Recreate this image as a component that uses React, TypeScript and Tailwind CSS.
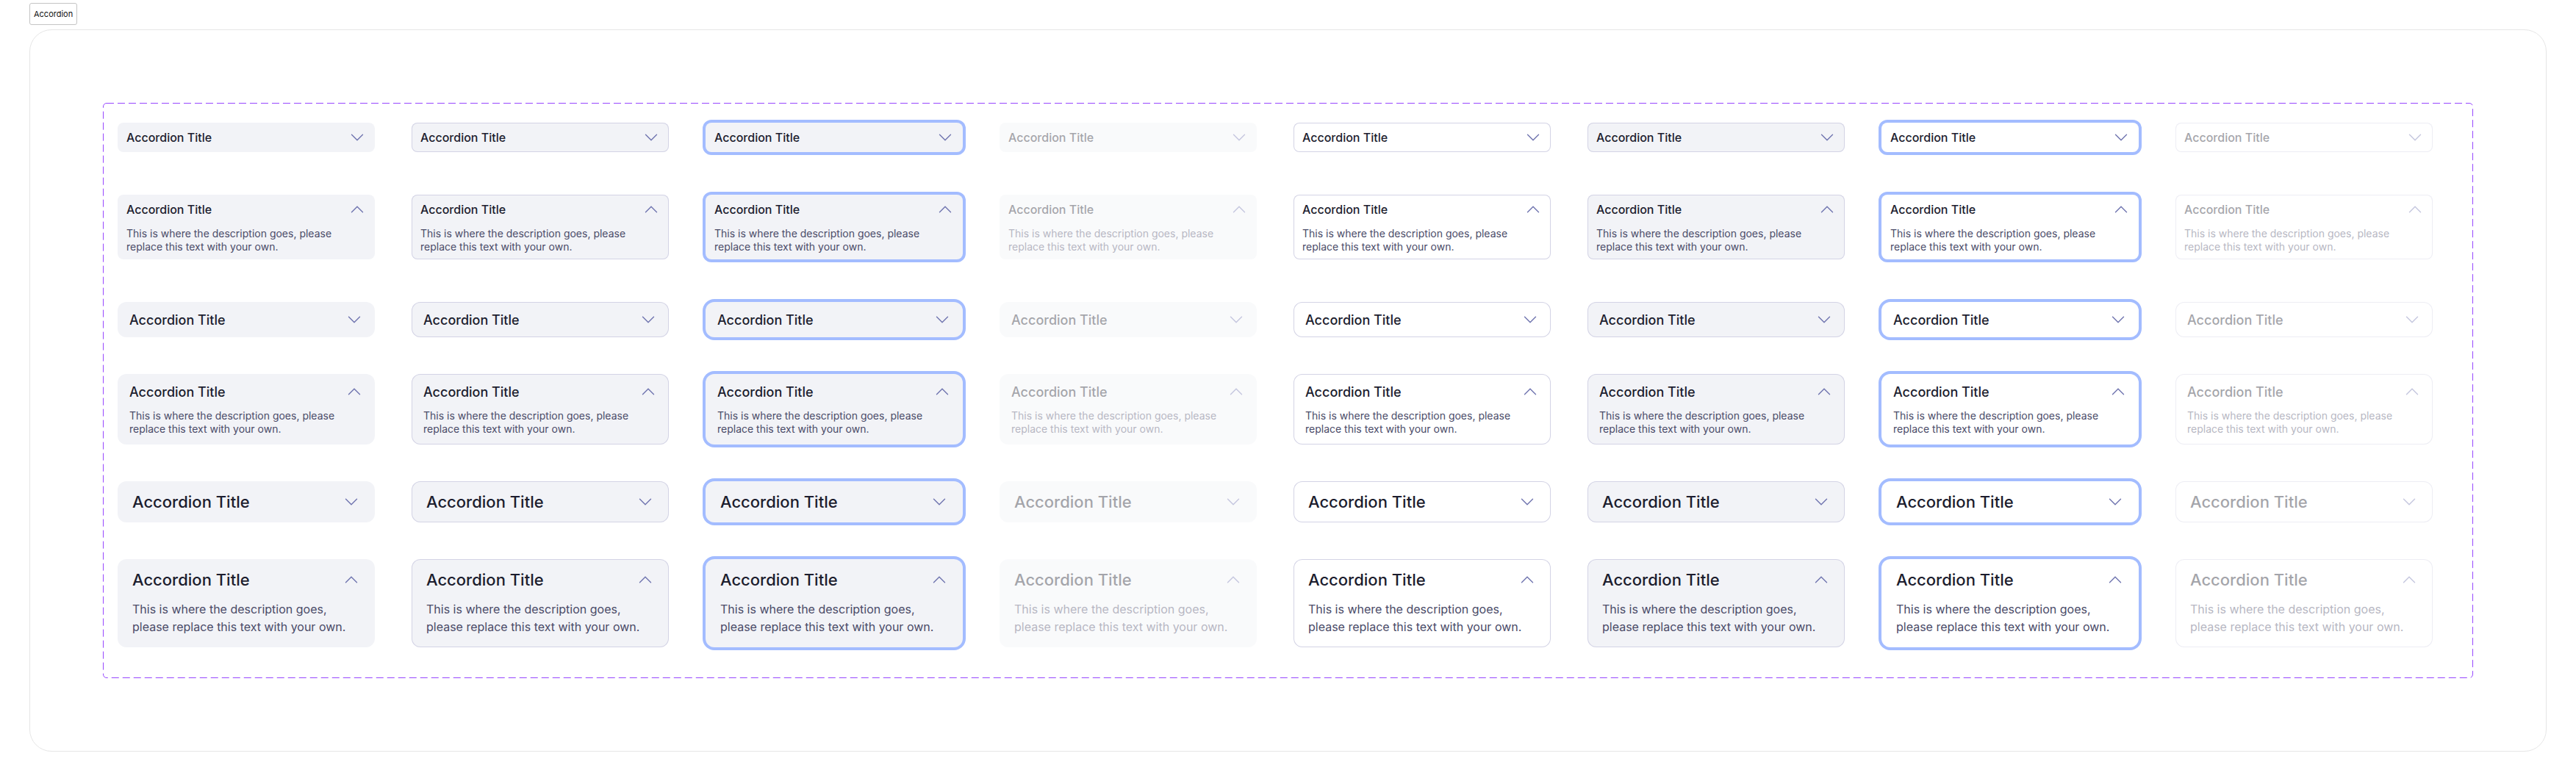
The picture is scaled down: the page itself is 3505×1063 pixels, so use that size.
import { useState } from "react";

type Size = "sm" | "md" | "lg";
type Tone = "filled" | "filledHover" | "filledFocus" | "filledDisabled" | "outline" | "outlineHover" | "outlineFocus" | "outlineDisabled";

const tones: { id: Tone; card: string; disabled?: boolean }[] = [
  { id: "filled", card: "bg-[#f2f3f7]" },
  { id: "filledHover", card: "bg-[#f2f3f7] ring-1 ring-inset ring-[#d3d3e5]" },
  { id: "filledFocus", card: "bg-[#f2f3f7] ring-4 ring-[#a3bcff]" },
  { id: "filledDisabled", card: "bg-[#f2f3f7] opacity-40", disabled: true },
  { id: "outline", card: "bg-white ring-1 ring-inset ring-[#d3d3e5]" },
  { id: "outlineHover", card: "bg-[#f2f3f7] ring-1 ring-inset ring-[#d3d3e5]" },
  { id: "outlineFocus", card: "bg-white ring-4 ring-[#a3bcff]" },
  { id: "outlineDisabled", card: "bg-white ring-1 ring-inset ring-[#d3d3e5] opacity-40", disabled: true },
];

const sizes: Record<Size, { card: string; head: string; body: string }> = {
  sm: {
    card: "rounded-lg",
    head: "h-10 px-3 text-[16px]",
    body: "px-3 pt-1 pb-2 text-[14px] leading-[18px]",
  },
  md: {
    card: "rounded-xl",
    head: "h-12 px-4 text-[18px]",
    body: "px-4 pb-3 text-[14px] leading-[18px]",
  },
  lg: {
    card: "rounded-xl",
    head: "h-14 px-5 text-[22px]",
    body: "px-5 pb-4 text-[16px] leading-6",
  },
};

const rows: { size: Size; open: boolean; gap: string }[] = [
  { size: "sm", open: false, gap: "" },
  { size: "sm", open: true, gap: "mt-[58px]" },
  { size: "md", open: false, gap: "mt-[58px]" },
  { size: "md", open: true, gap: "mt-[50px]" },
  { size: "lg", open: false, gap: "mt-[50px]" },
  { size: "lg", open: true, gap: "mt-[50px]" },
];

function Chevron({ open }: { open: boolean }) {
  return (
    <svg
      viewBox="0 0 24 24"
      className="size-6 shrink-0 text-[#6f74af]"
      fill="none"
      stroke="currentColor"
      strokeWidth="1.4"
      strokeLinecap="round"
      aria-hidden="true"
    >
      <path d={open ? "M4.5 15.8 12 8.3l7.5 7.5" : "M4.5 8.2 12 15.7l7.5-7.5"} />
    </svg>
  );
}

function Accordion({
  size,
  card,
  disabled,
  defaultOpen,
  id,
}: {
  size: Size;
  card: string;
  disabled?: boolean;
  defaultOpen: boolean;
  id: string;
}) {
  const [open, setOpen] = useState(defaultOpen);
  const s = sizes[size];
  return (
    <section className={`${s.card} ${card}`}>
      <button
        type="button"
        id={`${id}-title`}
        aria-expanded={open}
        aria-controls={`${id}-body`}
        disabled={disabled}
        onClick={() => setOpen(!open)}
        className={`flex w-full items-center justify-between text-left font-medium text-[#1c1d2e] ${s.head}`}
      >
        Accordion Title
        <Chevron open={open} />
      </button>
      {open && (
        <p id={`${id}-body`} aria-labelledby={`${id}-title`} className={`text-[#4a4b68] ${s.body}`}>
          {size === "lg" ? (
            <>
              This is where the description goes,
              <br />
              please replace this text with your own.
            </>
          ) : (
            <>
              This is where the description goes, please
              <br />
              replace this text with your own.
            </>
          )}
        </p>
      )}
    </section>
  );
}

export default function App() {
  return (
    <div className="bg-white px-10 pt-1 pb-10 font-['Inter',sans-serif]">
      <h1 className="flex h-[30px] w-fit items-center rounded-[3px] border border-[#c4c4c4] px-[5px] text-[11px] text-[#111111]">
        Accordion
      </h1>
      <main className="mt-1.5 rounded-[30px] border border-[#e6e6e6] px-[99px] pt-[99px] pb-[99px]">
        <div className="relative pt-[27px] pr-[55px] pb-[42px] pl-5">
          <svg className="pointer-events-none absolute inset-0 size-full overflow-visible" aria-hidden="true">
            <rect
              className="h-[calc(100%-1px)] w-[calc(100%-1px)]"
              x="0.5"
              y="0.5"
              rx="4.5"
              fill="none"
              stroke="#9747ff"
              strokeDasharray="10 5"
            />
          </svg>
          {rows.map((row, r) => (
            <div key={r} className={`grid grid-cols-8 items-start gap-x-[50px] ${row.gap}`}>
              {tones.map((tone) => (
                <Accordion
                  key={tone.id}
                  id={`${tone.id}-${r}`}
                  size={row.size}
                  card={tone.card}
                  disabled={tone.disabled}
                  defaultOpen={row.open}
                />
              ))}
            </div>
          ))}
        </div>
      </main>
    </div>
  );
}
